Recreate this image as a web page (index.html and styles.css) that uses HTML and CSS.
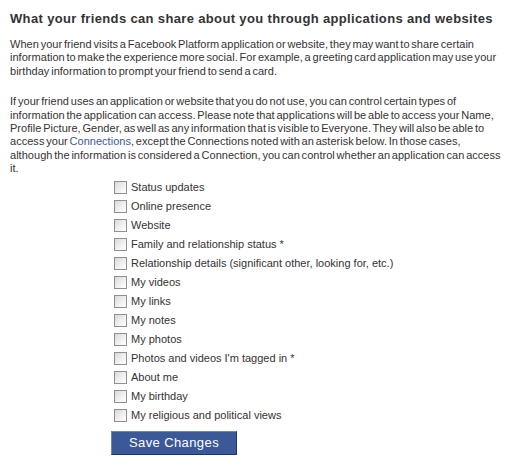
FILE: index.html
```
<!DOCTYPE html>
<html>
<head>
<meta charset="utf-8">
<link rel="stylesheet" href="styles.css">
</head>
<body>
<div class="page">
  <h2 class="title">What your friends can share about you through applications and websites</h2>
  <p class="para">When your friend visits a Facebook Platform application or website, they may want to share certain information to make the experience more social. For example, a greeting card application may use your birthday information to prompt your friend to send a card.</p>
  <p class="para">If your friend uses an application or website that you do not use, you can control certain types of information the application can access. Please note that applications will be able to access your Name, Profile Picture, Gender, as well as any information that is visible to Everyone. They will also be able to access your <a class="link" href="#">Connections</a>, except the Connections noted with an asterisk below. In those cases, although the information is considered a Connection, you can control whether an application can access it.</p>
  <ul class="options">
    <li class="option"><span class="box"></span><span class="label">Status updates</span></li>
    <li class="option"><span class="box"></span><span class="label">Online presence</span></li>
    <li class="option"><span class="box"></span><span class="label">Website</span></li>
    <li class="option"><span class="box"></span><span class="label">Family and relationship status *</span></li>
    <li class="option"><span class="box"></span><span class="label">Relationship details (significant other, looking for, etc.)</span></li>
    <li class="option"><span class="box"></span><span class="label">My videos</span></li>
    <li class="option"><span class="box"></span><span class="label">My links</span></li>
    <li class="option"><span class="box"></span><span class="label">My notes</span></li>
    <li class="option"><span class="box"></span><span class="label">My photos</span></li>
    <li class="option"><span class="box"></span><span class="label">Photos and videos I'm tagged in *</span></li>
    <li class="option"><span class="box"></span><span class="label">About me</span></li>
    <li class="option"><span class="box"></span><span class="label">My birthday</span></li>
    <li class="option"><span class="box"></span><span class="label">My religious and political views</span></li>
  </ul>
  <button class="save" type="button">Save Changes</button>
</div>
</body>
</html>
```
FILE: styles.css
```
html, body {
  margin: 0;
  padding: 0;
  background: #ffffff;
}
.page {
  padding: 11px 12px 0 10px;
  font-family: "Liberation Sans", Arial, sans-serif;
  color: #333333;
  font-size: 11px;
}
.title {
  margin: 0 0 11px 0;
  font-size: 13px;
  line-height: 16px;
  font-weight: bold;
  letter-spacing: 0.35px;
  color: #333333;
  white-space: nowrap;
}
.para {
  margin: 0 0 17px 0;
  line-height: 13.4px;
  letter-spacing: 0.03px;
  word-spacing: -1.3px;
}
.para:last-of-type {
  margin-bottom: 2px;
}
.link {
  color: #3b5998;
  text-decoration: none;
}
.options {
  list-style: none;
  margin: 0;
  padding: 0 0 0 104px;
}
.option {
  display: flex;
  align-items: center;
  height: 19px;
  gap: 4px;
}
.box {
  box-sizing: border-box;
  width: 13px;
  height: 13px;
  border: 1px solid #8e8f8f;
  background: linear-gradient(135deg, #d9d9d6 0%, #eeeeec 50%, #ffffff 100%);
  flex: none;
}
.label {
  line-height: 13px;
}
.save {
  display: block;
  margin: 6px 0 0 101px;
  width: 126px;
  height: 24px;
  padding: 0;
  background: #3b5998;
  color: #ffffff;
  border: 1px solid;
  border-color: #6d84b4 #1a356e #1a356e #6d84b4;
  font-family: "Liberation Sans", Arial, sans-serif;
  font-size: 13px;
  letter-spacing: 0.4px;
}
```
